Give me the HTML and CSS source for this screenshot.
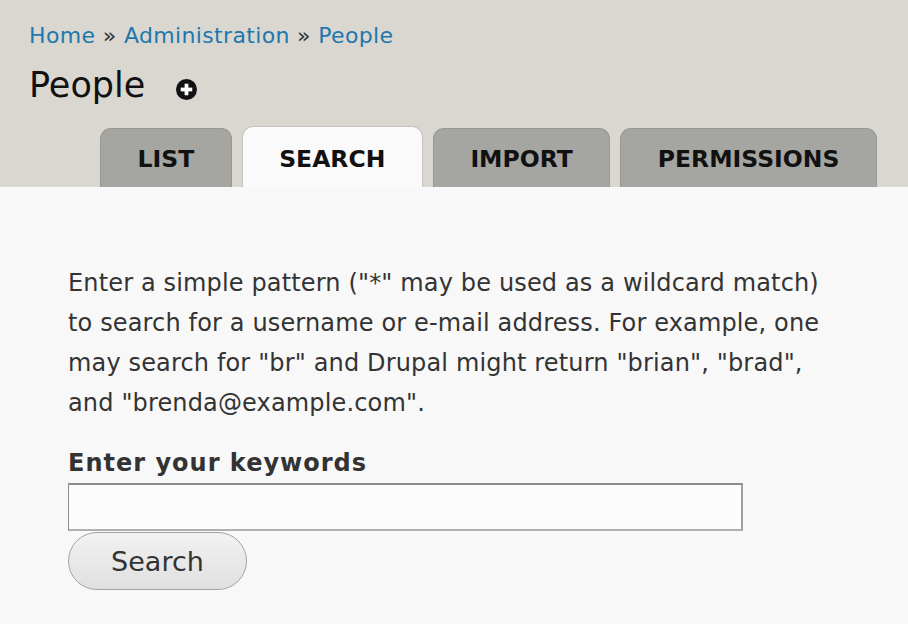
FILE: index.html
```html
<!DOCTYPE html>
<html>
<head>
<meta charset="utf-8">
<link rel="stylesheet" href="styles.css">
</head>
<body>
<div class="header">
  <div class="breadcrumb"><a href="#">Home</a> » <a href="#">Administration</a> » <a href="#">People</a></div>
  <div class="title-row">
    <h1 class="title">People</h1>
    <span class="shortcut"><svg width="21" height="21" viewBox="0 0 20 20"><circle cx="10" cy="10" r="10" fill="#111"/><rect x="8.2" y="4.5" width="3.6" height="11" fill="#fff"/><rect x="4.5" y="8.2" width="11" height="3.6" fill="#fff"/></svg></span>
  </div>
  <ul class="tabs">
    <li class="tab">LIST</li>
    <li class="tab active">SEARCH</li>
    <li class="tab">IMPORT</li>
    <li class="tab">PERMISSIONS</li>
  </ul>
</div>
<div class="content">
  <p class="help">Enter a simple pattern ("*" may be used as a wildcard match) to search for a username or e-mail address. For example, one may search for "br" and Drupal might return "brian", "brad", and "brenda@example.com".</p>
  <label class="label">Enter your keywords</label>
  <input class="text-input" type="text">
  <div class="actions"><button class="button">Search</button></div>
</div>
</body>
</html>
```
FILE: styles.css
```css
html, body {
  margin: 0;
  padding: 0;
  background: #f8f8f8;
  font-family: "DejaVu Sans", sans-serif;
  color: #333;
}
.header {
  background: #d9d7d0;
  padding: 22px 0 0 29px;
  height: 165px;
  display: flex;
  flex-direction: column;
}
.breadcrumb {
  font-size: 22px;
  letter-spacing: 0.35px;
  line-height: 28px;
  color: #333;
}
.breadcrumb a {
  color: #1e78ad;
  text-decoration: none;
}
.title-row {
  display: flex;
  align-items: center;
  margin-top: 14px;
  height: 42px;
}
.title {
  margin: 0;
  font-size: 35px;
  font-weight: normal;
  color: #111;
  line-height: 42px;
}
.shortcut {
  margin-left: 31px;
  margin-top: 9px;
  display: flex;
}
.tabs {
  list-style: none;
  margin: auto 0 0 0;
  padding: 0 0 0 71px;
  display: flex;
  gap: 10px;
  align-items: flex-end;
}
.tab {
  height: 59px;
  box-sizing: border-box;
  padding: 0 36.5px;
  background: #a5a5a2;
  border: 1px solid #979795;
  border-bottom: none;
  border-radius: 11px 11px 0 0;
  font-weight: bold;
  font-size: 23.5px;
  color: #111;
  display: flex;
  align-items: center;
  padding-top: 2px;
}
.tab.active {
  background: #fafafa;
  border-color: #c4c4c0;
  height: 61px;
  padding-top: 4px;
}
.content {
  padding: 0 68px;
}
.help {
  margin: 76px 0 0;
  font-size: 24px;
  letter-spacing: 0.15px;
  line-height: 40px;
  max-width: 775px;
}
.label {
  display: block;
  margin-top: 25px;
  font-weight: bold;
  font-size: 24px;
  letter-spacing: 1px;
  line-height: 30px;
  color: #333;
}
.text-input {
  display: block;
  margin-top: 5px;
  width: 675px;
  height: 48px;
  box-sizing: border-box;
  border: 1px solid #8d8d8d;
  border-top-width: 2px;
  border-right: 2px solid #a0a0a0;
  border-bottom: 2px solid #b0b0b0;
  background: #fcfcfc;
  padding: 0;
}
.actions {
  margin-top: 1px;
}
.button {
  width: 179px;
  height: 58px;
  border: 1px solid #a4a4a4;
  border-radius: 30px;
  background: linear-gradient(#f2f2f2, #e0e0e0);
  font-family: "DejaVu Sans", sans-serif;
  font-size: 27px;
  color: #333;
  padding: 0;
}
```
